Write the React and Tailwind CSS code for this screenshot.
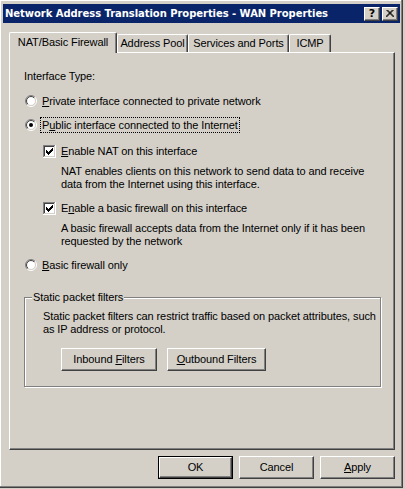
import React from 'react';

const Radio = ({ checked }) => (
  <svg width="12" height="12" viewBox="0 0 12 12" className="shrink-0">
    <defs>
      <linearGradient id="rOuter" x1="0" y1="0" x2="1" y2="1">
        <stop offset="0.5" stopColor="#808080" />
        <stop offset="0.5" stopColor="#ffffff" />
      </linearGradient>
      <linearGradient id="rInner" x1="0" y1="0" x2="1" y2="1">
        <stop offset="0.5" stopColor="#404040" />
        <stop offset="0.5" stopColor="#d4d0c8" />
      </linearGradient>
    </defs>
    <circle cx="6" cy="6" r="5.5" fill="none" stroke="url(#rOuter)" strokeWidth="1" />
    <circle cx="6" cy="6" r="4.5" fill="#fff" stroke="url(#rInner)" strokeWidth="1" />
    {checked && <circle cx="6" cy="6" r="2" fill="#000" />}
  </svg>
);

const Check = () => {
  const starts = [2, 3, 4, 3, 2, 1, 0];
  return (
    <svg width="13" height="13" viewBox="0 0 13 13" className="shrink-0">
      <rect x="0" y="0" width="13" height="13" fill="#fff" />
      <rect x="0" y="0" width="12" height="12" fill="#808080" />
      <rect x="1" y="1" width="11" height="11" fill="#d4d0c8" />
      <rect x="1" y="1" width="10" height="10" fill="#404040" />
      <rect x="2" y="2" width="9" height="9" fill="#fff" />
      {starts.map((s, i) => (
        <rect key={i} x={3 + i} y={3 + s} width="1" height="3" fill="#000" />
      ))}
    </svg>
  );
};

const Button = ({ children, width = 'w-[75px]', isDefault }) => {
  const inner = (
    <div className="h-full flex items-center justify-center bg-[#d4d0c8] border border-t-white border-l-white border-r-[#404040] border-b-[#404040] shadow-[inset_-1px_-1px_0_#808080]">
      <span>{children}</span>
    </div>
  );
  return isDefault ? (
    <div className={`${width} h-[23px] border border-black`}>{inner}</div>
  ) : (
    <div className={`${width} h-[23px]`}>{inner}</div>
  );
};

const Tab = ({ label, width, selected }) => (
  <div
    className={`${width} flex items-center justify-center bg-[#d4d0c8] border-l border-t border-white border-r border-r-[#404040] shadow-[inset_-1px_0_0_#808080] rounded-tl-[2px] rounded-tr-[2px] ${
      selected ? 'h-[21px] -mb-px relative z-10 pb-[2px]' : 'h-[18px]'
    }`}
  >
    {label}
  </div>
);

export default function App() {
  return (
    <div className="w-[405px] h-[489px] bg-[#d4d0c8] overflow-hidden text-[11px] leading-[13px] tracking-[-0.1px] text-black font-['Liberation_Sans',Arial,sans-serif]">
      <div className="w-[403px] h-[488px] flex flex-col pl-[3px] pr-[2px] pt-[4px] border-r border-b border-[#404040] shadow-[inset_-1px_-1px_0_#808080,inset_1px_1px_0_#fff]">
        {/* caption */}
        <div className="h-[19px] bg-[#0a246a] flex items-center pl-[2px] pr-[2px]">
          <span className="text-white font-bold text-[10px] font-['DejaVu_Sans',Verdana,sans-serif] tracking-[-0.05px] whitespace-nowrap">
            Network Address Translation Properties - WAN Properties
          </span>
          <div className="ml-auto flex gap-[2px]">
            <div className="w-[16px] h-[14px] bg-[#d4d0c8] border border-t-white border-l-white border-r-[#404040] border-b-[#404040] shadow-[inset_-1px_-1px_0_#808080] flex items-center justify-center font-bold text-[11px] leading-none font-['DejaVu_Sans',sans-serif]">
              ?
            </div>
            <div className="w-[16px] h-[14px] bg-[#d4d0c8] border border-t-white border-l-white border-r-[#404040] border-b-[#404040] shadow-[inset_-1px_-1px_0_#808080] flex items-center justify-center">
              <svg width="8" height="7" viewBox="0 0 8 7">
                <path d="M0.5 0 L7.5 7 M1.5 0 L8.5 7 M7.5 0 L0.5 7 M6.5 0 L-0.5 7" stroke="#000" strokeWidth="1" />
              </svg>
            </div>
          </div>
        </div>

        {/* tabs */}
        <div className="mt-[9px] ml-[6px] w-[386px]">
          <div className="flex items-end h-[20px]">
            <Tab label="NAT/Basic Firewall" width="w-[108px]" selected />
            <Tab label="Address Pool" width="w-[71px]" />
            <Tab label="Services and Ports" width="w-[101px]" />
            <Tab label="ICMP" width="w-[42px]" />
          </div>

          <div className="h-[398px] border-l border-t border-white border-r border-b border-r-[#404040] border-b-[#404040] shadow-[inset_-1px_-1px_0_#808080] pl-[14px] pt-[17px] flex flex-col whitespace-nowrap">
            <div className="h-[13px]">Interface Type:</div>

            <div className="mt-[10px] h-[16px] flex items-center">
              <span className="ml-[1px]"><Radio /></span>
              <span className="ml-[5px]"><u>P</u>rivate interface connected to private network</span>
            </div>

            <div className="mt-[8px] h-[16px] flex items-center">
              <span className="ml-[1px]"><Radio checked /></span>
              <span className="ml-[4px] outline outline-1 outline-dotted outline-black px-[1px] leading-[14px]">
                P<u>u</u>blic interface connected to the Internet
              </span>
            </div>

            <div className="mt-[10px] h-[16px] flex items-center pl-[19px]">
              <Check />
              <span className="ml-[5px]"><u>E</u>nable NAT on this interface</span>
            </div>

            <div className="mt-[6px] pl-[37px]">
              <div>NAT enables clients on this network to send data to and receive</div>
              <div>data from the Internet using this interface.</div>
            </div>

            <div className="mt-[9px] h-[16px] flex items-center pl-[19px]">
              <Check />
              <span className="ml-[5px]">E<u>n</u>able a basic firewall on this interface</span>
            </div>

            <div className="mt-[6px] pl-[37px]">
              <div>A basic firewall accepts data from the Internet only if it has been</div>
              <div>requested by the network</div>
            </div>

            <div className="mt-[9px] h-[16px] flex items-center">
              <span className="ml-[1px]"><Radio /></span>
              <span className="ml-[5px]"><u>B</u>asic firewall only</span>
            </div>

            {/* group box */}
            <div className="mt-[24px] w-[357px] h-[90px] relative border border-[#808080] shadow-[inset_1px_1px_0_#fff,1px_1px_0_#fff] pl-[18px] pt-[12px]">
              <span className="absolute -top-[7px] left-[7px] bg-[#d4d0c8] px-[1px]">Static packet filters</span>
              <div>Static packet filters can restrict traffic based on packet attributes, such</div>
              <div>as IP address or protocol.</div>
              <div className="mt-[12px] ml-[18px] flex gap-[10px]">
                <Button width="w-[96px]">Inbound <u>F</u>ilters</Button>
                <Button width="w-[99px]"><u>O</u>utbound Filters</Button>
              </div>
            </div>
          </div>

          <div className="mt-[6px] flex justify-end gap-[6px]">
            <Button isDefault>OK</Button>
            <Button>Cancel</Button>
            <Button><u>A</u>pply</Button>
          </div>
        </div>
      </div>
    </div>
  );
}
